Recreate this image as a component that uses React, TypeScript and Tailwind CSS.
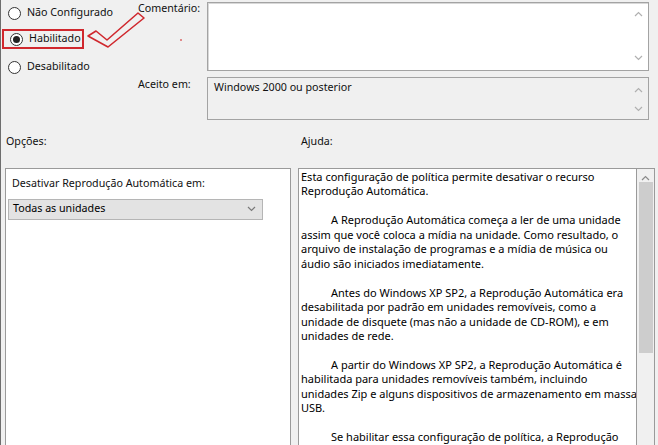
import React from "react";

const Up = ({ c = "#9a9a9a" }: { c?: string }) => (
  <svg width="9" height="6" viewBox="0 0 9 6"><path d="M1 5 L4.5 1.5 L8 5" fill="none" stroke={c} strokeWidth="1.2" /></svg>
);
const Down = ({ c = "#9a9a9a" }: { c?: string }) => (
  <svg width="9" height="6" viewBox="0 0 9 6"><path d="M1 1 L4.5 4.5 L8 1" fill="none" stroke={c} strokeWidth="1.2" /></svg>
);

const Radio = ({ checked, label }: { checked?: boolean; label: string }) => (
  <div className="flex items-center h-[18px]">
    <span className="w-[13px] h-[13px] rounded-full border border-[#333] bg-white flex items-center justify-center ml-[7px] mr-[6px]">
      {checked && <span className="w-[7px] h-[7px] rounded-full bg-[#222]" />}
    </span>
    <span>{label}</span>
  </div>
);

const L = ({ children, indent }: { children: React.ReactNode; indent?: boolean }) => (
  <div className={indent ? "pl-[30px] whitespace-nowrap" : "whitespace-nowrap"}>{children}</div>
);

export default function App() {
  return (
    <div
      className="w-[658px] h-[445px] bg-[#f0f0f0] overflow-hidden border-l border-[#6e6e6e] text-[10.7px] leading-[15.5px] text-[#111]"
      style={{ fontFamily: '"Noto Sans", "Open Sans", sans-serif' }}
    >
      <div className="flex h-[126px]">
        <div className="w-[135px] pt-[4px] relative">
          <Radio label="Não Configurado" />
          <div className="mt-[7px] ml-[1px] w-[82px] h-[20px] border-2 border-[#d0282e] flex items-center">
            <div className="-ml-[1px]"><Radio checked label="Habilitado" /></div>
          </div>
          <div className="mt-[9px]"><Radio label="Desabilitado" /></div>
          <svg className="absolute left-[84px] top-[8px]" width="62" height="44" viewBox="0 0 62 44">
            <path d="M3 28 L11 23 L22 32 L53 5 L59 10 L23 39 Z" fill="none" stroke="#d0282e" strokeWidth="1.6" strokeLinejoin="round" />
          </svg>
        </div>
        <div className="w-[71px] relative">
          <div className="mt-[1px] ml-[2px]">Comentário:</div>
          <div className="mt-[60px] ml-[2px]">Aceito em:</div>
          <span className="absolute left-[44px] top-[39px] w-[2px] h-[2px] bg-[#e08a8a]" />
        </div>
        <div className="w-[442px] flex flex-col">
          <div className="mt-[2px] h-[69px] bg-white border border-[#a3a3a3] shadow-[inset_1px_1px_0_#d8d8d8] flex justify-end">
            <div className="w-[19px] flex flex-col items-center justify-between pt-[8px] pb-[9px]">
              <Up c="#b0b0b0" />
              <Down c="#b0b0b0" />
            </div>
          </div>
          <div className="mt-[6px] h-[43px] bg-[#f0f0f0] border border-[#a3a3a3] flex">
            <div className="flex-1 pl-[6px] pt-[2px]">Windows 2000 ou posterior</div>
            <div className="w-[19px] flex flex-col items-center justify-between pt-[9px] pb-[7px]">
              <Up c="#b0b0b0" />
              <Down c="#b0b0b0" />
            </div>
          </div>
        </div>
      </div>

      <div className="flex h-[42px] pt-[8px]">
        <div className="w-[299px] pl-[5px]">Opções:</div>
        <div className="pl-[1px]">Ajuda:</div>
      </div>

      <div className="flex h-[300px]">
        <div className="ml-[4px] w-[286px] bg-white border border-[#9a9a9a] pt-[7px] pl-[2px]">
          <div className="pl-[4px]">Desativar Reprodução Automática em:</div>
          <div className="mt-[7px] w-[255px] h-[21px] bg-[#e3e3e3] border border-[#b5b5b5] flex items-center justify-between pl-[4px] pr-[6px] text-[#000]">
            <span>Todas as unidades</span>
            <Down c="#7a7a7a" />
          </div>
        </div>
        <div className="ml-[7px] w-[357px] border border-[#9a9a9a] flex">
          <div className="w-[338px] bg-white border-r border-[#9a9a9a] pl-[2px] pt-[1px] text-black text-[11px] leading-[14.45px] overflow-hidden">
            <div className="mb-[14.45px]">
              <L>Esta configuração de política permite desativar o recurso</L>
              <L>Reprodução Automática.</L>
            </div>
            <div className="mb-[14.45px]">
              <L indent>A Reprodução Automática começa a ler de uma unidade</L>
              <L>assim que você coloca a mídia na unidade. Como resultado, o</L>
              <L>arquivo de instalação de programas e a mídia de música ou</L>
              <L>áudio são iniciados imediatamente.</L>
            </div>
            <div className="mb-[14.45px]">
              <L indent>Antes do Windows XP SP2, a Reprodução Automática era</L>
              <L>desabilitada por padrão em unidades removíveis, como a</L>
              <L>unidade de disquete (mas não a unidade de CD-ROM), e em</L>
              <L>unidades de rede.</L>
            </div>
            <div className="mb-[14.45px]">
              <L indent>A partir do Windows XP SP2, a Reprodução Automática é</L>
              <L>habilitada para unidades removíveis também, incluindo</L>
              <L>unidades Zip e alguns dispositivos de armazenamento em massa</L>
              <L>USB.</L>
            </div>
            <div>
              <L indent>Se habilitar essa configuração de política, a Reprodução</L>
            </div>
          </div>
          <div className="flex-1 bg-[#f0f0f0] flex flex-col items-center pt-[6px]">
            <Up c="#8a8a8a" />
            <div className="mt-[1px] w-[14px] h-[171px] bg-[#cdcdcd]" />
          </div>
        </div>
      </div>
    </div>
  );
}
